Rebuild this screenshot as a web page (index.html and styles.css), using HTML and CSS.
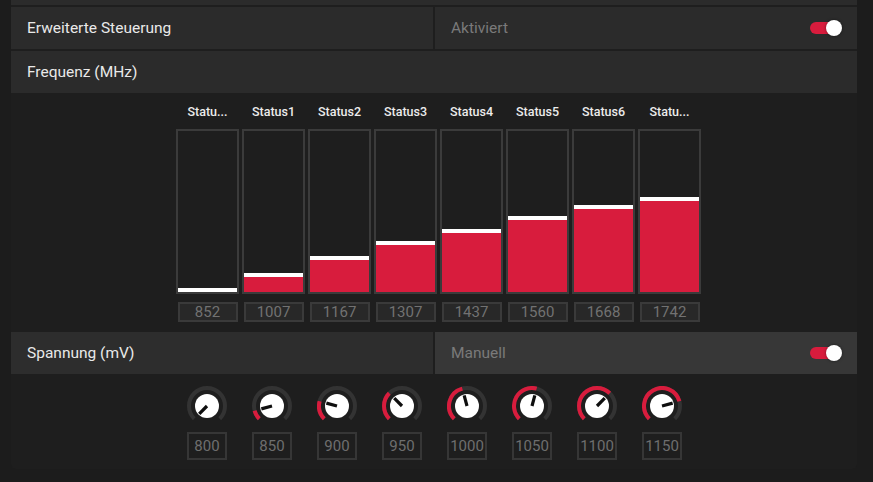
FILE: index.html
```html
<!DOCTYPE html>
<html lang="de">
<head>
<meta charset="utf-8">
<title>Erweiterte Steuerung</title>
<link rel="stylesheet" href="styles.css">
</head>
<body>
<div class="panel">
  <div class="stub"></div>

  <div class="row split">
    <div class="cell title">Erweiterte Steuerung</div>
    <div class="cell muted">
      <span>Aktiviert</span>
      <span class="toggle"><span class="track"></span><span class="thumb"></span></span>
    </div>
  </div>

  <div class="row">
    <div class="cell title">Frequenz (MHz)</div>
  </div>

  <div class="bars">
    <div class="col"><div class="label">Statu...</div><div class="bar"><div class="fill" style="height:4px"></div></div><div class="val">852</div></div>
    <div class="col"><div class="label">Status1</div><div class="bar"><div class="fill" style="height:19px"></div></div><div class="val">1007</div></div>
    <div class="col"><div class="label">Status2</div><div class="bar"><div class="fill" style="height:36px"></div></div><div class="val">1167</div></div>
    <div class="col"><div class="label">Status3</div><div class="bar"><div class="fill" style="height:51px"></div></div><div class="val">1307</div></div>
    <div class="col"><div class="label">Status4</div><div class="bar"><div class="fill" style="height:63px"></div></div><div class="val">1437</div></div>
    <div class="col"><div class="label">Status5</div><div class="bar"><div class="fill" style="height:76px"></div></div><div class="val">1560</div></div>
    <div class="col"><div class="label">Status6</div><div class="bar"><div class="fill" style="height:87px"></div></div><div class="val">1668</div></div>
    <div class="col"><div class="label">Statu...</div><div class="bar"><div class="fill" style="height:95px"></div></div><div class="val">1742</div></div>
  </div>

  <div class="row split alt">
    <div class="cell title">Spannung (mV)</div>
    <div class="cell muted light">
      <span>Manuell</span>
      <span class="toggle"><span class="track"></span><span class="thumb"></span></span>
    </div>
  </div>

  <div class="knobs">
    <div class="kcol">
      <svg class="knob" viewBox="0 0 40 40" width="40" height="40"><path class="trk" d="M7.272 32.728 A18 18 0 1 1 32.728 32.728"/><circle class="cap" cx="20" cy="20" r="12"/><line class="ptr" x1="20" y1="20" x2="12.22" y2="27.78"/></svg>
      <div class="kval">800</div>
    </div>
    <div class="kcol">
      <svg class="knob" viewBox="0 0 40 40" width="40" height="40"><path class="trk" d="M7.272 32.728 A18 18 0 1 1 32.728 32.728"/><path class="arc" d="M7.272 32.728 A18 18 0 0 1 2.613 24.659"/><circle class="cap" cx="20" cy="20" r="12"/><line class="ptr" x1="20" y1="20" x2="9.37" y2="22.85"/></svg>
      <div class="kval">850</div>
    </div>
    <div class="kcol">
      <svg class="knob" viewBox="0 0 40 40" width="40" height="40"><path class="trk" d="M7.272 32.728 A18 18 0 1 1 32.728 32.728"/><path class="arc" d="M7.272 32.728 A18 18 0 0 1 2.613 15.341"/><circle class="cap" cx="20" cy="20" r="12"/><line class="ptr" x1="20" y1="20" x2="9.37" y2="17.15"/></svg>
      <div class="kval">900</div>
    </div>
    <div class="kcol">
      <svg class="knob" viewBox="0 0 40 40" width="40" height="40"><path class="trk" d="M7.272 32.728 A18 18 0 1 1 32.728 32.728"/><path class="arc" d="M7.272 32.728 A18 18 0 0 1 7.272 7.272"/><circle class="cap" cx="20" cy="20" r="12"/><line class="ptr" x1="20" y1="20" x2="12.22" y2="12.22"/></svg>
      <div class="kval">950</div>
    </div>
    <div class="kcol">
      <svg class="knob" viewBox="0 0 40 40" width="40" height="40"><path class="trk" d="M7.272 32.728 A18 18 0 1 1 32.728 32.728"/><path class="arc" d="M7.272 32.728 A18 18 0 0 1 15.341 2.613"/><circle class="cap" cx="20" cy="20" r="12"/><line class="ptr" x1="20" y1="20" x2="17.15" y2="9.37"/></svg>
      <div class="kval">1000</div>
    </div>
    <div class="kcol">
      <svg class="knob" viewBox="0 0 40 40" width="40" height="40"><path class="trk" d="M7.272 32.728 A18 18 0 1 1 32.728 32.728"/><path class="arc" d="M7.272 32.728 A18 18 0 0 1 24.659 2.613"/><circle class="cap" cx="20" cy="20" r="12"/><line class="ptr" x1="20" y1="20" x2="22.85" y2="9.37"/></svg>
      <div class="kval">1050</div>
    </div>
    <div class="kcol">
      <svg class="knob" viewBox="0 0 40 40" width="40" height="40"><path class="trk" d="M7.272 32.728 A18 18 0 1 1 32.728 32.728"/><path class="arc" d="M7.272 32.728 A18 18 0 0 1 32.728 7.272"/><circle class="cap" cx="20" cy="20" r="12"/><line class="ptr" x1="20" y1="20" x2="27.78" y2="12.22"/></svg>
      <div class="kval">1100</div>
    </div>
    <div class="kcol">
      <svg class="knob" viewBox="0 0 40 40" width="40" height="40"><path class="trk" d="M7.272 32.728 A18 18 0 1 1 32.728 32.728"/><path class="arc" d="M7.272 32.728 A18 18 0 1 1 37.387 15.341"/><circle class="cap" cx="20" cy="20" r="12"/><line class="ptr" x1="20" y1="20" x2="30.63" y2="17.15"/></svg>
      <div class="kval">1150</div>
    </div>
  </div>
</div>
</body>
</html>
```

FILE: styles.css
```css
* { box-sizing: border-box; }

html, body {
  margin: 0;
  padding: 0;
}

body {
  width: 873px;
  height: 482px;
  overflow: hidden;
  background: #1c1c1c;
  font-family: Roboto, "Open Sans", sans-serif;
  color: #e6e6e6;
}

.panel {
  margin-left: 11px;
  width: 846px;
  height: 469px;
  background: #1e1e1e;
  border-radius: 0 0 5px 5px;
  display: flex;
  flex-direction: column;
  gap: 2px;
}

.stub {
  height: 5px;
  background: #2b2b2b;
}

.row {
  height: 42px;
  display: flex;
  gap: 2px;
}

.cell {
  flex: 1;
  background: #2b2b2b;
  display: flex;
  align-items: center;
  justify-content: space-between;
  padding: 0 15px 0 16px;
  font-size: 15.5px;
}

.title { color: #e9e9e9; }

.muted { color: #7a7a7a; }

.alt .cell { background: #2d2d2d; }
.alt .cell.light { background: #373737; }

.toggle {
  position: relative;
  width: 32px;
  height: 16px;
  display: flex;
  align-items: center;
}

.track {
  width: 26px;
  height: 12px;
  border-radius: 6px;
  background: #d81c3d;
}

.thumb {
  position: absolute;
  right: 0;
  top: 0;
  width: 16px;
  height: 16px;
  border-radius: 50%;
  background: #ffffff;
  box-shadow: 0 0 3px rgba(0, 0, 0, 0.5);
}

/* Frequency bars */
.bars {
  height: 235px;
  display: flex;
  gap: 3px;
  padding: 9px 0 8px 165px;
}

.col {
  width: 63px;
  display: flex;
  flex-direction: column;
  align-items: center;
}

.label {
  height: 16px;
  line-height: 16px;
  font-size: 12.5px;
  font-weight: 500;
  color: #ececec;
  margin-bottom: 9px;
}

.bar {
  width: 63px;
  height: 165px;
  border: 2px solid #3b3b3b;
  background: #1e1e1e;
  display: flex;
  flex-direction: column;
  justify-content: flex-end;
}

.fill {
  background: #d81c3d;
  border-top: 4px solid #ffffff;
}

.val {
  margin-top: 8px;
  width: 60px;
  height: 20px;
  border: 2px solid #3a3a3a;
  background: #282828;
  color: #727272;
  font-size: 15px;
  line-height: 16px;
  text-align: center;
}

/* Voltage knobs */
.knobs {
  height: 93px;
  display: flex;
  gap: 25px;
  padding: 10px 0 0 176px;
}

.kcol {
  width: 40px;
  display: flex;
  flex-direction: column;
  align-items: center;
  gap: 6px;
}

.knob { display: block; }

.trk {
  fill: none;
  stroke: #333333;
  stroke-width: 4;
}

.arc {
  fill: none;
  stroke: #d81c3d;
  stroke-width: 4;
}

.cap { fill: #ffffff; }

.ptr {
  stroke: #0e0e0e;
  stroke-width: 3.2;
}

.kval {
  width: 40px;
  height: 28px;
  border: 2px solid #363636;
  color: #6e6e6e;
  font-size: 15px;
  line-height: 24px;
  text-align: center;
}
```
